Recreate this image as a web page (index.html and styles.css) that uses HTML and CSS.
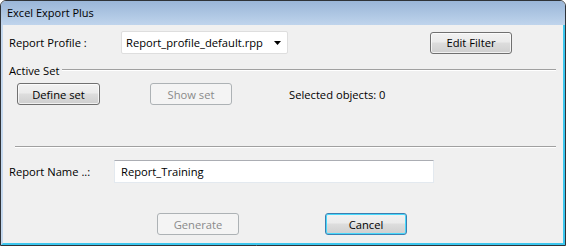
FILE: index.html
```html
<!DOCTYPE html>
<html lang="en">
<head>
    <meta charset="UTF-8">
    <title>Excel Export Plus</title>
    <link rel="stylesheet" href="styles.css">
</head>
<body>
    <div class="window">
        <div class="titlebar">Excel Export Plus</div>
        <div class="content">
            <div class="row profile-row">
                <label class="label profile-label">Report Profile :</label>
                <div class="select">
                    <span>Report_profile_default.rpp</span>
                    <svg class="arrow" width="7" height="4" viewBox="0 0 7 4"><path d="M0 0H7L3.5 4Z" fill="#000"/></svg>
                </div>
                <button class="btn edit-filter">Edit Filter</button>
            </div>
            <div class="group-title">
                <span>Active Set</span>
                <div class="group-line"></div>
            </div>
            <div class="row set-row">
                <button class="btn define-set">Define set</button>
                <button class="btn show-set" disabled>Show set</button>
                <span class="selected">Selected objects: 0</span>
            </div>
            <div class="separator"></div>
            <div class="row name-row">
                <label class="label name-label">Report Name ..:</label>
                <input class="textbox" type="text" value="Report_Training">
            </div>
            <div class="row action-row">
                <button class="btn generate" disabled>Generate</button>
                <button class="btn cancel">Cancel</button>
            </div>
        </div>
    </div>
</body>
</html>
```

FILE: styles.css
```css
* {
    box-sizing: border-box;
}

body {
    margin: 0;
    background: #ffffff;
    font-family: "Open Sans", "Noto Sans", sans-serif;
    font-size: 11.2px;
    color: #000000;
}

.window {
    width: 566px;
    height: 246px;
    border: 1px solid #2f3338;
    border-radius: 6px 6px 0 0;
    background: #f0f0f0;
    overflow: hidden;
    display: flex;
    flex-direction: column;
}

.titlebar {
    height: 24px;
    padding-left: 6px;
    line-height: 23px;
    font-size: 11px;
    background: linear-gradient(#9ab6d8, #b0c8e4 60%, #bfd4ec);
    color: #000000;
}

.content {
    flex: 1;
    border-left: 2px solid #c4d8ee;
    border-right: 2px solid #3cc6ee;
    border-bottom: 2px solid #3cc6ee;
    padding: 6px 7px 0 6px;
}

.row {
    display: flex;
    align-items: center;
}

.label {
    flex: none;
}

.profile-label {
    width: 112px;
}

.select {
    width: 167px;
    height: 23px;
    background: #ffffff;
    border: 1px solid #dedede;
    border-radius: 2px;
    display: flex;
    align-items: center;
    justify-content: space-between;
    padding: 0 6px 0 4px;
}

.arrow {
    display: block;
}

.btn {
    font-family: inherit;
    font-size: 11.2px;
    height: 22px;
    width: 82px;
    padding: 0;
    border: 1px solid #707070;
    border-radius: 3px;
    background: linear-gradient(#f2f2f2, #ebebeb 45%, #dddddd 50%, #cfcfcf);
    color: #000000;
    box-shadow: inset 0 0 0 1px rgba(255, 255, 255, 0.7);
}

.btn:disabled {
    border-color: #adb2b5;
    background: #f4f4f4;
    color: #8a8a8a;
    box-shadow: none;
}

.edit-filter {
    margin-left: 142px;
}

.group-title {
    display: flex;
    align-items: center;
    height: 14px;
    margin-top: 9px;
}

.group-line {
    flex: 1;
    height: 2px;
    margin-left: 3px;
    border-top: 1px solid #a0a0a0;
    border-bottom: 1px solid #ffffff;
}

.set-row {
    margin-top: 6px;
}

.define-set {
    margin-left: 8px;
    width: 83px;
}

.show-set {
    margin-left: 50px;
}

.selected {
    margin-left: 57px;
}

.separator {
    margin: 41px 0 0 6px;
    height: 2px;
    border-top: 1px solid #a0a0a0;
    border-bottom: 1px solid #ffffff;
}

.name-row {
    margin-top: 12px;
}

.name-label {
    width: 105px;
}

.textbox {
    width: 320px;
    height: 23px;
    font-family: inherit;
    font-size: 11.2px;
    padding: 0 6px;
    border: 1px solid #e3e9ef;
    border-top-color: #abadb3;
    background: #ffffff;
    color: #000000;
    outline: none;
}

.action-row {
    margin-top: 30px;
}

.generate {
    margin-left: 148px;
}

.cancel {
    margin-left: 86px;
    border-color: #3c7fb1;
    box-shadow: inset 0 0 0 1px #48d8fb;
}
```
